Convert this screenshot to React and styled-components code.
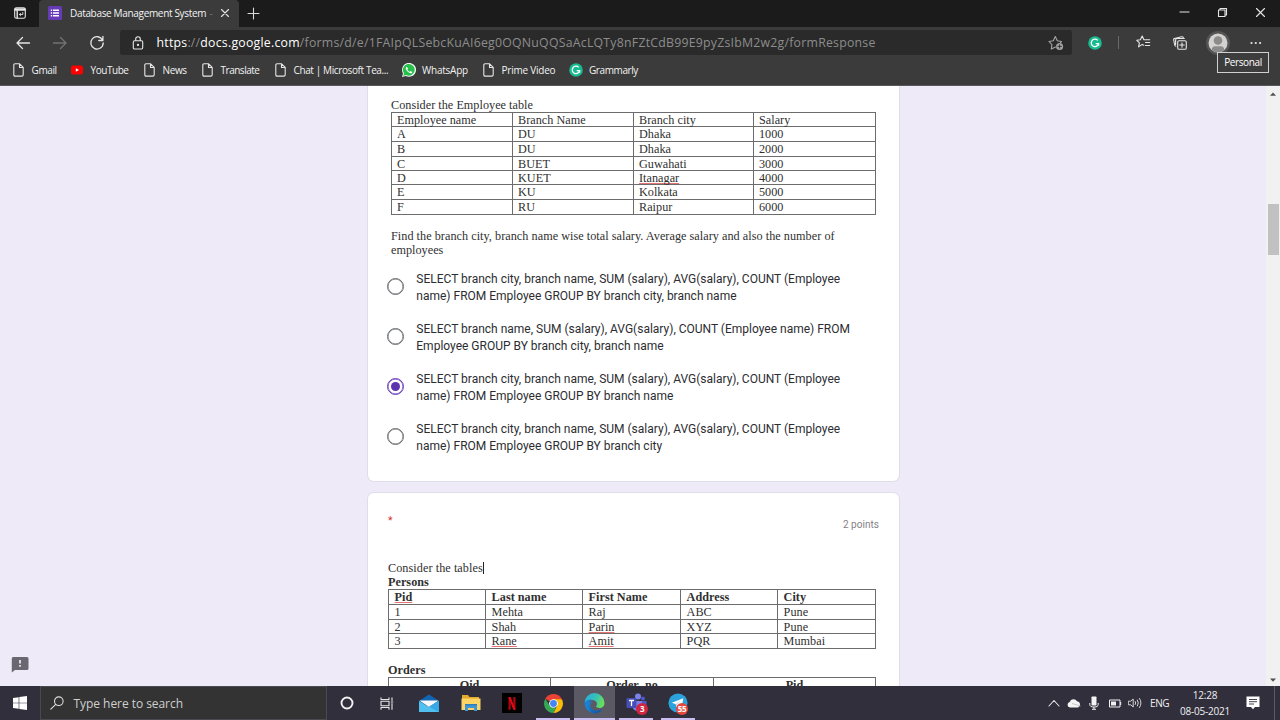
import React from 'react';
import styled, { createGlobalStyle, css } from 'styled-components';

const ui = '"Open Sans", "Noto Sans", sans-serif';

const GlobalStyle = createGlobalStyle`
  * { box-sizing: border-box; }
  body { margin: 0; background: #eeeaf8; overflow: hidden; }
  svg { display: block; flex: none; }
`;

const Screen = styled.div`
  width: 1280px;
  height: 720px;
  display: flex;
  flex-direction: column;
  overflow: hidden;
`;

/* ---------- browser chrome ---------- */

const TabStrip = styled.header`
  display: flex;
  align-items: center;
  height: 27px;
  flex: none;
  background: #1b1b1b;
  font-family: ${ui};
`;

const TabActions = styled.div`
  width: 39px;
  padding-bottom: 1px;
  display: flex;
  justify-content: center;
`;

const Tab = styled.div`
  display: flex;
  align-items: center;
  width: 200px;
  height: 27px;
  padding: 0 7px 1px 9px;
  background: #3b3b3b;
  border-radius: 4px 4px 0 0;
`;

const TabTitle = styled.span`
  flex: 1;
  margin-left: 8px;
  font-size: 10px;
  letter-spacing: -0.33px;
  white-space: nowrap;
  overflow: hidden;
  color: #f4f4f4;

  i { font-style: normal; color: #777; margin-left: 1px; }
`;

const NewTab = styled.div`
  margin-left: 8px;
  padding-bottom: 1px;
`;

const WindowButtons = styled.div`
  display: flex;
  gap: 27px;
  margin-left: auto;
  margin-right: 14px;
  padding-bottom: 2px;
  align-items: center;
`;

const Toolbar = styled.div`
  display: flex;
  align-items: center;
  height: 31px;
  flex: none;
  padding-left: 15px;
  background: #3b3b3b;
`;

const NavButtons = styled.div`
  display: flex;
  width: 105px;
  gap: 21px;
  align-items: center;
`;

const AddressBar = styled.div`
  display: flex;
  align-items: center;
  width: 952px;
  height: 25px;
  padding: 0 8px 0 12px;
  background: #2a2a2a;
  border-radius: 3px;
  font-family: ${ui};
  font-size: 12.3px;
  color: #8d8d8d;
  white-space: nowrap;
`;

const Url = styled.span`
  flex: 1;
  margin-left: 12.5px;
  letter-spacing: 0.235px;

  b { font-weight: 400; color: #fff; }
`;

const ToolbarIcons = styled.div`
  display: flex;
  align-items: center;
  margin-left: 16px;
`;

const Divider = styled.div`
  width: 1px;
  height: 13px;
  margin: 0 17px 0 16px;
  background: #6a6a6a;
`;

const Collections = styled.div`
  margin: 0 7px 0 22px;
`;

const ProfileButton = styled.div`
  position: relative;
  margin: 0 19px 0 12px;
`;

const Tooltip = styled.div`
  position: absolute;
  left: 11px;
  top: 21px;
  z-index: 2;
  width: 52px;
  height: 21px;
  border: 1px solid #d0d0d0;
  background: #3d3d3d;
  color: #fff;
  font: 10px/19px ${ui};
  letter-spacing: -0.38px;
  text-align: center;
`;

const Bookmarks = styled.nav`
  display: flex;
  align-items: center;
  height: 28px;
  flex: none;
  padding: 0 0 4px 13px;
  background: #3b3b3b;
  border-bottom: 1px solid #57565a;
`;

const Bookmark = styled.div`
  display: flex;
  align-items: center;
  gap: ${p => p.$gap || 7.5}px;
  width: ${p => p.$width}px;
  font-family: ${ui};
  font-size: 10px;
  letter-spacing: ${p => p.$track || -0.38}px;
  color: #f2f2f2;
  white-space: nowrap;
`;

/* ---------- page ---------- */

const Viewport = styled.main`
  display: flex;
  flex: 1;
  min-height: 0;
  background: #eeeaf8;
`;

const Side = styled.aside`
  width: 367px;
  display: flex;
  align-items: flex-end;
  padding: 0 0 13px 11px;
`;

const Column = styled.div`
  width: 533px;
  display: flex;
  flex-direction: column;
  gap: 10px;
  overflow: hidden;
`;

const Card = styled.section`
  flex: none;
  background: #fff;
  border: 1px solid #e0ddea;
  ${p => p.$first
    ? css`
        height: 396px;
        padding: 12px 23px 0;
        border-top: 0;
        border-radius: 0 0 7px 7px;
      `
    : css`
        height: 260px;
        padding: 24px 20px 0;
        border-radius: 7px 7px 0 0;
      `}
`;

const Serif = styled.p`
  margin: 0;
  font-family: "Liberation Serif", serif;
  font-size: 12.2px;
  line-height: 14px;
  letter-spacing: ${p => p.$track ?? 0.03}px;
  font-weight: ${p => (p.$bold ? 700 : 400)};
  color: #303030;
  white-space: nowrap;
`;

const QuestionImage = styled.div`
  margin-top: ${p => p.$top || 0}px;
`;

const Sheet = styled.div`
  display: grid;
  grid-template-columns: ${p => p.$cols};
  grid-template-rows: ${p => p.$rows};
  width: ${p => p.$width}px;
  border: solid #6c6c6c;
  border-width: 1px 0 0 1px;
  margin-bottom: ${p => p.$after || 0}px;
`;

const Cell = styled.div`
  padding-left: ${p => (p.$center ? 0 : p.$inset)}px;
  border: solid #6c6c6c;
  border-width: 0 1px 1px 0;
  font-family: "Liberation Serif", serif;
  font-size: 12.2px;
  line-height: 15px;
  letter-spacing: 0.03px;
  font-weight: ${p => (p.$bold ? 700 : 400)};
  text-align: ${p => (p.$center ? 'center' : 'left')};
  color: #303030;
  white-space: nowrap;
`;

const Misspelt = styled.span`
  text-decoration: underline #e27474 1px;
  text-underline-offset: 1px;
  text-decoration-skip-ink: none;
`;

const Caret = styled.span`
  display: inline-block;
  width: 1px;
  height: 12px;
  background: #222;
  vertical-align: -2px;
`;

const Options = styled.div`
  display: flex;
  flex-direction: column;
  gap: 16.67px;
  margin: 13px 0 0 -4px;
`;

const Option = styled.label`
  display: flex;
  align-items: center;
  gap: 12.3px;
  font-family: Roboto, sans-serif;
  font-size: 12px;
  line-height: 16.67px;
  letter-spacing: 0;
  color: #2c2d31;
  white-space: nowrap;
`;

const OptionText = styled.span`
  padding-top: 1px;
  margin-bottom: -1px;
`;

const Radio = styled.span`
  width: 17px;
  height: 17px;
  flex: none;
  display: grid;
  place-items: center;
  border: 1.6px solid ${p => (p.$on ? '#673ab7' : '#6a6d71')};
  box-shadow: inset 0 0 0 .5px ${p => (p.$on ? '#673ab7' : '#6a6d71')};
  border-radius: 50%;

  &::after {
    content: '';
    width: 9px;
    height: 9px;
    border-radius: 50%;
    background: ${p => (p.$on ? '#5c34b0' : 'transparent')};
  }
`;

const CardHead = styled.div`
  display: flex;
  justify-content: space-between;
  font-family: Roboto, sans-serif;
  height: 44px;
`;

const Required = styled.span`
  font-size: 10.5px;
  line-height: 8px;
  color: #d93025;
`;

const Points = styled.span`
  padding-top: 1px;
  font-size: 10px;
  line-height: 13px;
  letter-spacing: 0.03px;
  color: #857f84;
`;

const Scrollbar = styled.div`
  display: flex;
  flex-direction: column;
  align-items: center;
  justify-content: space-between;
  width: 14px;
  margin-left: auto;
  padding: 6px 0 4px;
  background: #f1f1f1;
`;

const Thumb = styled.div`
  width: 11px;
  height: 51px;
  margin: 0 0 315px;
  background: #c1c1c1;
`;

/* ---------- taskbar ---------- */

const Taskbar = styled.footer`
  display: flex;
  height: 34px;
  flex: none;
  background: #322f3c;
  font-family: ${ui};
`;

const Start = styled.div`
  width: 40px;
  display: grid;
  place-items: center;
`;

const Search = styled.div`
  display: flex;
  align-items: center;
  gap: 9.500px;
  width: 287px;
  padding-left: 9px;
  background: #333;
  border: 1px solid #4a4850;
  font-size: 12px;
  letter-spacing: -0.05px;
  color: #cfcfcf;
`;

const AppButton = styled.div`
  position: relative;
  display: grid;
  place-items: center;
  width: ${p => p.$width || 41.4}px;
  background: ${p => (p.$active ? '#5b5963' : 'transparent')};
`;

const Running = styled.span`
  position: absolute;
  bottom: 0;
  left: ${p => (p.$wide ? 0 : 4)}px;
  right: ${p => (p.$wide ? 0 : 4)}px;
  height: 2px;
  background: #c9bdf2;
`;

const Badge = styled.span`
  position: absolute;
  left: ${p => p.$left}px;
  top: ${p => p.$top}px;
  width: 12px;
  height: 12px;
  border-radius: 50%;
  background: ${p => p.$color};
  color: #fff;
  font: 700 8px/12px ${ui};
  letter-spacing: -0.4px;
  text-align: center;
`;

const Tray = styled.div`
  display: flex;
  align-items: center;
  margin-left: auto;
  width: 236px;
  color: #f0f0f0;
  font-size: 10px;
`;

const TrayIcons = styled.div`
  display: grid;
  grid-template-columns: repeat(5, 20.2px);
  place-items: center;
  margin-right: 5px;
`;

const Language = styled.span`
  width: 20px;
  letter-spacing: -0.35px;
`;

const Clock = styled.div`
  display: flex;
  flex-direction: column;
  align-items: center;
  width: 70px;
  line-height: 15.5px;
  letter-spacing: -0.22px;
  padding-top: 1px;
`;

const Notice = styled.div`
  margin-left: 6px;
`;

const ShowDesktop = styled.div`
  width: 1px;
  height: 34px;
  margin-left: 14px;
  background: #5d5b66;
`;

/* ---------- icons ---------- */

const Line = ({ w, h = w, c = '#e6e6e6', s = 1.1, children }) => (
  <svg width={w} height={h} viewBox={`0 0 ${w} ${h}`} fill="none" stroke={c} strokeWidth={s} strokeLinecap="round" strokeLinejoin="round">
    {children}
  </svg>
);

const PageIcon = () => (
  <Line w={11} h={14}>
    <path d="M2 .8h4.6l3.6 3.6v7.4q0 1.3-1.3 1.3H2Q.8 13.1.8 11.8V2Q.8.8 2 .8zM6.500.9v3.600H10" />
  </Line>
);

const YouTubeIcon = () => (
  <svg width="12" height="10" viewBox="0 0 12 10">
    <rect y=".5" width="12" height="9" rx="2" fill="#f00" />
    <path d="M4.800 3.200v3.600L8 5z" fill="#fff" />
  </svg>
);

const WhatsAppIcon = () => (
  <svg width="14" height="14" viewBox="0 0 14 14">
    <path d="M0 14l1-3.600A7 7 0 1 1 3.700 13z" fill="#f4f4f4" />
    <path d="M1.300 12.700l.7-2.500A5.900 5.900 0 1 1 4 12z" fill="#25c14b" />
    <path d="M4.900 3.700c-.9.3-1.200 1.100-1 2 .5 2 2.400 4 4.500 4.500 1 .2 1.800-.3 1.900-1.300L8.600 8l-.8.8C6.700 8.400 5.800 7.500 5.400 6.500l.6-.8z" fill="#fff" />
  </svg>
);

const GrammarlyIcon = () => (
  <svg width="14" height="14" viewBox="0 0 14 14">
    <circle cx="7" cy="7" r="6.800" fill="#17bb8f" />
    <path d="M9.700 4.400A3.700 3.700 0 1 0 10.600 7.600H7.700M10.600 7.500v2.300" fill="none" stroke="#fff" strokeWidth="1.300" />
  </svg>
);

const bookmarks = [
  { name: 'Gmail', icon: PageIcon, width: 58 },
  { name: 'YouTube', icon: YouTubeIcon, width: 73, track: -0.44 },
  { name: 'News', icon: PageIcon, width: 58 },
  { name: 'Translate', icon: PageIcon, width: 72.5, track: -0.48 },
  { name: 'Chat | Microsoft Tea...', icon: PageIcon, width: 127.5, track: -0.38, gap: 8 },
  { name: 'WhatsApp', icon: WhatsAppIcon, width: 81, track: -0.24, gap: 6 },
  { name: 'Prime Video', icon: PageIcon, width: 86, track: -0.22 },
  { name: 'Grammarly', icon: GrammarlyIcon, width: 80, track: -0.41, gap: 6 },
];

const employees = [
  ['Employee name', 'Branch Name', 'Branch city', 'Salary'],
  ['A', 'DU', 'Dhaka', '1000'],
  ['B', 'DU', 'Dhaka', '2000'],
  ['C', 'BUET', 'Guwahati', '3000'],
  ['D', 'KUET', 'Itanagar', '4000'],
  ['E', 'KU', 'Kolkata', '5000'],
  ['F', 'RU', 'Raipur', '6000'],
];

const persons = [
  ['Pid', 'Last name', 'First Name', 'Address', 'City'],
  ['1', 'Mehta', 'Raj', 'ABC', 'Pune'],
  ['2', 'Shah', 'Parin', 'XYZ', 'Pune'],
  ['3', 'Rane', 'Amit', 'PQR', 'Mumbai'],
];

const misspelt = new Set(['Itanagar', 'Pid', 'Parin', 'Rane', 'Amit']);

const options = [
  ['SELECT branch city, branch name, SUM (salary), AVG(salary), COUNT (Employee', 'name) FROM Employee GROUP BY branch city, branch name'],
  ['SELECT branch name, SUM (salary), AVG(salary), COUNT (Employee name) FROM', 'Employee GROUP BY branch city, branch name'],
  ['SELECT branch city, branch name, SUM (salary), AVG(salary), COUNT (Employee', 'name) FROM Employee GROUP BY branch name'],
  ['SELECT branch city, branch name, SUM (salary), AVG(salary), COUNT (Employee', 'name) FROM Employee GROUP BY branch city'],
];

const cells = (data, inset, boldHead) =>
  data.flatMap((row, r) =>
    row.map((t, c) => (
      <Cell key={`${r}-${c}`} $inset={inset} $bold={boldHead && r === 0}>
        {misspelt.has(t) ? <Misspelt>{t}</Misspelt> : t}
      </Cell>
    ))
  );

function BrowserChrome() {
  return (
    <>
      <TabStrip>
        <TabActions>
          <Line w={12}>
            <rect x=".7" y=".7" width="10.600" height="10.600" rx="1.800" />
            <path d="M1 2h10M1 3h10M3.200 3v8" strokeWidth="1.400" />
            <path d="M8.800 5.500v2H5.500M6.600 6.200L5.400 7.500l1.200 1.200" strokeWidth=".9" />
          </Line>
        </TabActions>
        <Tab>
          <svg width="14" height="14" viewBox="0 0 14 14">
            <rect width="14" height="14" rx="1.500" fill="#673ab7" />
            <path d="M5 4.300h6M5 7h6M5 9.700h6M2.800 4.300h1.300M2.800 7h1.300M2.800 9.700h1.300" stroke="#fff" strokeWidth="1.400" />
          </svg>
          <TabTitle>Database Management System <i>-</i></TabTitle>
          <Line w={14}><path d="M3.500 3.500l7 7M10.500 3.500l-7 7" /></Line>
        </Tab>
        <NewTab><Line w={13} c="#d8d8d8"><path d="M6.500 1v11M1 6.500h11" /></Line></NewTab>
        <WindowButtons>
          <Line w={11}><path d="M1 5h9" /></Line>
          <Line w={11}><path d="M1.500 3h6.500v6.500H1.500zM3 3V1.500h6.500V8H8" /></Line>
          <Line w={11}><path d="M1.500 1.500l8 8M9.500 1.500l-8 8" /></Line>
        </WindowButtons>
      </TabStrip>
      <Toolbar>
        <NavButtons>
          <Line w={16} s={1.3}><path d="M14.500 8H2M7.500 2.500L2 8l5.500 5.500" /></Line>
          <Line w={16} c="#737373" s={1.3}><path d="M1.500 8H14M8.500 2.500L14 8l-5.500 5.500" /></Line>
          <Line w={16} s={1.3}><path d="M13.600 5.200A6.200 6.200 0 1 0 14.200 8M13.900 1.500v4H9.800" /></Line>
        </NavButtons>
        <AddressBar>
          <Line w={12} h={14}>
            <rect x="1.300" y="4.700" width="9.400" height="8.300" rx="1.200" />
            <path d="M3.700 4.500V3a2.300 2.300 0 0 1 4.600 0v1.500" />
            <circle cx="6" cy="8.900" r=".6" fill="#e6e6e6" />
          </Line>
          <Url><b>https</b>://<b>docs.google.com</b>/forms/d/e/1FAIpQLSebcKuAI6eg0OQNuQQSaAcLQTy8nFZtCdB99E9pyZsIbM2w2g/formResponse</Url>
          <Line w={16} c="#a4a4a4">
            <path d="M7.500 12L3.300 14l.6-4.300L1 6.500l4.300-.8L7.300 1.500l2 4.200 4.200.8-1 1" />
            <circle cx="11.600" cy="11.400" r="3.500" fill="#a4a4a4" stroke="none" />
            <path d="M11.600 9.600v3.600M9.800 11.400h3.600" stroke="#2a2a2a" strokeWidth=".9" />
          </Line>
        </AddressBar>
        <ToolbarIcons>
          <GrammarlyIcon />
          <Divider />
          <Line w={15}>
            <path d="M7.800 10.200l-1.600-.8-3.600 2.500.8-4.100L.8 5.300l3.600-.6L6.200 1l1.700 3.700h5.800M9.500 7.500h4.200M9.500 10.500h4.200" />
          </Line>
          <Collections>
            <Line w={14}>
              <rect x="4.700" y="4.700" width="8.600" height="8.600" rx="1.400" />
              <path d="M9 6.800v4.400M6.800 9h4.400" />
              <path d="M2.800 10.300Q1.900 9.900 1.700 9L.7 4Q.5 2.700 1.700 2.400M2.600 8.500V4q0-1.500 1.500-1.500h7.200M2.400 2.200L8.700.8q1.200-.2 1.600.7" />
            </Line>
          </Collections>
          <ProfileButton>
            <svg width="24" height="24" viewBox="0 0 24 24">
              <circle cx="12" cy="12" r="12" fill="#555" />
              <circle cx="12" cy="12" r="9.500" fill="#d4d2d0" />
              <circle cx="12" cy="9.500" r="4.300" fill="#8d8b89" />
              <path d="M5.700 19q.3-3.700 3.300-3.700h6q3 0 3.300 3.700A9.500 9.500 0 0 1 5.700 19z" fill="#8d8b89" />
            </svg>
            <Tooltip>Personal</Tooltip>
          </ProfileButton>
          <svg width="14" height="4" viewBox="0 0 14 4" fill="#e6e6e6">
            <circle cx="2.500" cy="2" r="1.100" /><circle cx="6.800" cy="2" r="1.100" /><circle cx="11.100" cy="2" r="1.100" />
          </svg>
        </ToolbarIcons>
      </Toolbar>
      <Bookmarks>
        {bookmarks.map(({ name, icon: Icon, width, track, gap }) => (
          <Bookmark key={name} $width={width} $track={track} $gap={gap}><Icon />{name}</Bookmark>
        ))}
      </Bookmarks>
    </>
  );
}

function FormPage() {
  return (
    <Viewport>
      <Side>
        <svg width="18" height="17" viewBox="0 0 18 17">
          <path d="M2 1h14q1.500 0 1.500 1.500v10q0 1.500-1.500 1.500H4L.8 16.500V2.500Q.8 1 2 1z" fill="#6a6770" />
          <path d="M9 4v3.500M9 9v1.800" stroke="#eeeaf8" strokeWidth="1.700" />
        </svg>
      </Side>
      <Column>
        <Card $first>
          <QuestionImage>
            <Serif>Consider the Employee table</Serif>
            <Sheet $width={485} $cols="121px 121px 120px 122px" $rows="14px 15px 15px 14px 14px 15px 15px" $after={14}>
              {cells(employees, 5)}
            </Sheet>
            <Serif $track={0.042}>Find the branch city, branch name wise total salary. Average salary and also the number of</Serif>
            <Serif>employees</Serif>
          </QuestionImage>
          <Options>
            {options.map(([a, b], i) => (
              <Option key={i}>
                <Radio $on={i === 2} />
                <OptionText>{a}<br />{b}</OptionText>
              </Option>
            ))}
          </Options>
        </Card>
        <Card>
          <CardHead>
            <Required>*</Required>
            <Points>2 points</Points>
          </CardHead>
          <QuestionImage>
            <Serif $track={0.07}>Consider the tables<Caret /></Serif>
            <Serif $bold>Persons</Serif>
            <Sheet $width={488} $cols="97px 97px 98px 97px 98px" $rows="15px 15px 14px 15px" $after={14}>
              {cells(persons, 5.6, true)}
            </Sheet>
            <Serif $bold>Orders</Serif>
            <Sheet $width={488} $cols="162px 163px 162px" $rows="15px">
              <Cell $bold $center>Oid</Cell>
              <Cell $bold $center>Order_no</Cell>
              <Cell $bold $center>Pid</Cell>
            </Sheet>
          </QuestionImage>
        </Card>
      </Column>
      <Scrollbar>
        <svg width="6" height="4" viewBox="0 0 6 4"><path d="M0 3.700L3 .4l3 3.300z" fill="#505050" /></svg>
        <Thumb />
        <svg width="6" height="4" viewBox="0 0 6 4"><path d="M0 .4L3 3.700 6 .4z" fill="#505050" /></svg>
      </Scrollbar>
    </Viewport>
  );
}

const MailIcon = () => (
  <svg width="22" height="19" viewBox="0 0 22 19">
    <path d="M1 7L11 .5 21 7v3H1z" fill="#1265b3" />
    <path d="M1 7l10 6 10-6v11H1z" fill="#4fc0f0" />
    <path d="M1.500 6.500h19L11 13z" fill="#f4f8fb" />
    <path d="M21 7v11L11 12.800z" fill="#36a8e6" />
  </svg>
);

const FolderIcon = () => (
  <svg width="20" height="18" viewBox="0 0 20 18">
    <path d="M1 1h6l1.500 2H18v5H1z" fill="#e5a92b" />
    <path d="M.5 4.500h19v11.500H.5z" fill="#fcd566" />
    <path d="M4 17v-6.500h12V17h-3v-3H7v3z" fill="#4396d5" />
    <path d="M4 10h12v1.500H4z" fill="#2d7fc0" />
  </svg>
);

const NetflixIcon = () => (
  <svg width="20" height="20" viewBox="0 0 20 20">
    <path d="M0 0h20v20H0z" fill="#000" />
    <path d="M6.500 4h2.200v12.500L6.500 17zM11.300 4h2.200v13l-2.200-.5z" fill="#b0060f" />
    <path d="M6.500 4h2.200L13.500 17l-2.300-.5z" fill="#e50914" />
  </svg>
);

const ChromeIcon = () => (
  <svg width="19" height="19" viewBox="0 0 20 20">
    <path d="M10 10L1.340 5A10 10 0 0 1 18.660 5z" fill="#ea4335" />
    <path d="M10 10V5.500h8.900A10 10 0 0 1 10 20l3.900-7.800z" fill="#fbbc05" />
    <path d="M10 20A10 10 0 0 1 1.340 5l4.800 7.300L10 14.500l2.700-.1z" fill="#34a853" />
    <circle cx="10" cy="10" r="4.600" fill="#fff" />
    <circle cx="10" cy="10" r="3.600" fill="#4285f4" />
  </svg>
);

const EdgeIcon = () => (
  <svg width="21" height="21" viewBox="0 0 21 21">
    <defs>
      <linearGradient id="edgeTop" x1="0" y1="0" x2="1" y2=".3">
        <stop offset="0" stopColor="#2aa8e0" /><stop offset=".6" stopColor="#35c1b9" /><stop offset="1" stopColor="#67dc5d" />
      </linearGradient>
      <linearGradient id="edgeLow" x1="0" y1="0" x2="1" y2="1">
        <stop offset="0" stopColor="#1b86da" /><stop offset="1" stopColor="#0d4f9e" />
      </linearGradient>
    </defs>
    <path d="M.5 10A10 10 0 0 1 20.500 10c0 3.200-2.200 5-5 5-2 0-3.500-.8-3.500-1.500 0-.6 1-1 1-2.500C13 8.500 10.500 7 7.500 7 4 7 1.500 8.500.5 10z" fill="url(#edgeTop)" />
    <path d="M.5 10.800C1 8 4 6.300 7.500 6.500c-2 1.100-3 3-3 5 0 4 3 7.500 7.500 8.300A10.200 10.200 0 0 1 .5 10.800z" fill="#1683d8" />
    <path d="M8.800 8.300c-2.500 1.200-3 3.800-2 6.200 1.500 3.500 6.700 4 11.700 1.600-2 3.200-5.500 4.600-8.500 4.400C6.500 19.500 4 15.800 4.200 12 4.500 9.500 6.300 8 8.800 8.300z" fill="url(#edgeLow)" />
  </svg>
);

const TeamsIcon = () => (
  <svg width="21" height="20" viewBox="0 0 21 20">
    <circle cx="17" cy="5.500" r="2" fill="#5059c9" />
    <circle cx="12" cy="3.500" r="3" fill="#7b83eb" />
    <path d="M13 8h7.500v5a3.500 3.500 0 0 1-5 3.500z" fill="#5059c9" />
    <path d="M7 8h9v6.500a5 5 0 0 1-9 1z" fill="#7b83eb" />
    <rect x=".5" y="5" width="10" height="10" rx="1" fill="#464eb8" />
    <path d="M3 7.500h5M5.500 7.500v5.500" stroke="#fff" strokeWidth="1.300" />
  </svg>
);

const TelegramIcon = () => (
  <svg width="20" height="20" viewBox="0 0 20 20">
    <circle cx="10" cy="10" r="9.600" fill="#2ba2dc" />
    <path d="M3.800 9.800L15.300 5.200 13.500 15 10 12.500 8.200 14.200 7.800 11.300z" fill="#fff" />
    <path d="M7.800 11.300L13 7.300 9 11.800l-.8 2.400z" fill="#b9d9ec" />
  </svg>
);

function WindowsTaskbar() {
  return (
    <Taskbar>
      <Start>
        <svg width="14" height="14" viewBox="0 0 14 14" fill="#fff">
          <path d="M0 2l5.700-.8v5.500H0zM6.300 1.100L14 0v6.700H6.300zM0 7.300h5.700v5.500L0 12zM6.300 7.300H14V14l-7.700-1.100z" />
        </svg>
      </Start>
      <Search>
        <Line w={14} c="#dcdcdc"><circle cx="8.800" cy="5.200" r="4.300" /><path d="M5.700 8.300L.8 13.200" /></Line>
        <span>Type here to search</span>
      </Search>
      <AppButton $width={39}><Line w={14} s={1.9} c="#f2f2f2"><circle cx="7" cy="7" r="5.500" /></Line></AppButton>
      <AppButton $width={42}>
        <Line w={14} h={13}><path d="M1 .8v1.700h8V.8M1 12.200v-1.700h8v1.700M1 4.200h8v4.600H1zM12 .8v2.700M12 6.500v5.700M11.200 5h1.600" /></Line>
      </AppButton>
      <AppButton $width={42}><MailIcon /></AppButton>
      <AppButton $width={41}><FolderIcon /></AppButton>
      <AppButton $width={41}><NetflixIcon /></AppButton>
      <AppButton $width={42}><ChromeIcon /><Running /></AppButton>
      <AppButton $width={41} $active><EdgeIcon /><Running $wide /></AppButton>
      <AppButton $width={42}>
        <TeamsIcon /><Running />
        <Badge $left={21} $top={17} $color="#d0263f">3</Badge>
      </AppButton>
      <AppButton $width={42}>
        <TelegramIcon /><Running />
        <Badge $left={19} $top={17} $color="#e8473c">55</Badge>
      </AppButton>
      <Tray>
        <TrayIcons>
          <Line w={12} h={8}><path d="M1 7l5-5.500L11 7" /></Line>
          <svg width="14" height="10" viewBox="0 0 14 10">
            <path d="M3 9.500a2.800 2.800 0 0 1-.3-5.500A4 4 0 0 1 10 3.300a3.200 3.200 0 0 1 1 6.200z" fill="#f4f4f4" />
            <path d="M5 5.500L13.500 8" stroke="#bbb" strokeWidth=".8" />
          </svg>
          <svg width="10" height="14" viewBox="0 0 10 14">
            <rect x="2.500" y=".5" width="5" height="9" rx=".8" fill="#f4f4f4" />
            <path d="M.8 7v1.500Q.8 11 5 11t4.200-2.500V7M5 11v2M3 13.300h4" stroke="#f4f4f4" fill="none" />
          </svg>
          <svg width="14" height="9" viewBox="0 0 14 9">
            <path d="M1.500 1h10.500v7H1.500zM12.700 3v3" stroke="#f0f0f0" fill="none" />
            <path d="M3 2.500h5v4H3z" fill="#f0f0f0" />
          </svg>
          <Line w={14} h={12} s={0.9}><path d="M.7 4.200h2L5.200 2v8L2.700 7.800h-2zM7.300 4.500q1 1.500 0 3M9.400 3q2 3 0 6M11.500 1.500q3 4.500 0 9" /></Line>
        </TrayIcons>
        <Language>ENG</Language>
        <Clock><span>12:28</span><span>08-05-2021</span></Clock>
        <Notice>
          <svg width="14" height="14" viewBox="0 0 14 14">
            <path d="M.5.500h13v10.500H9L7 13.300 5 11H.5z" fill="#fff" />
            <path d="M3 3.500h8M3 5.700h8M3 8h5" stroke="#322f3c" strokeWidth=".9" />
          </svg>
        </Notice>
        <ShowDesktop />
      </Tray>
    </Taskbar>
  );
}

export default function App() {
  return (
    <Screen>
      <GlobalStyle />
      <BrowserChrome />
      <FormPage />
      <WindowsTaskbar />
    </Screen>
  );
}
